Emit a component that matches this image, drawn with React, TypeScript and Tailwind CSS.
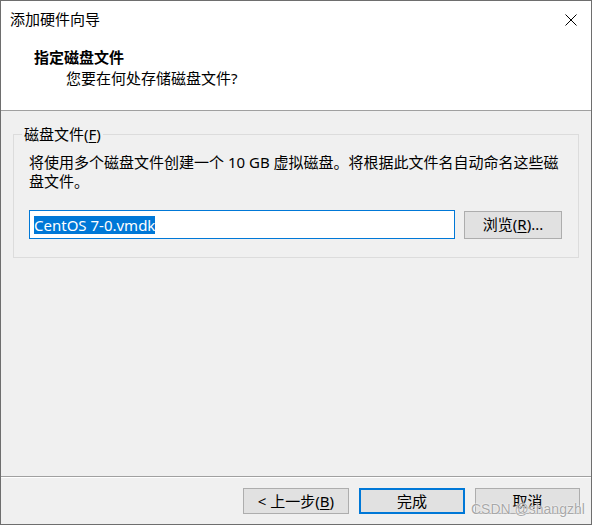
import type { ReactNode } from "react";

const ui = "font-['Noto_Sans','Noto_Sans_CJK_SC',sans-serif]";

function Key({ k }: { k: string }) {
  return <span className="underline underline-offset-2">{k}</span>;
}

function Button({
  children,
  active,
  className = "",
}: {
  children: ReactNode;
  active?: boolean;
  className?: string;
}) {
  return (
    <button
      type="button"
      className={
        active
          ? `flex h-[26px] items-center justify-center border-2 border-[#0078d7] bg-[#e1e1e1] text-[15px] text-black ${className}`
          : `flex h-[26px] items-center justify-center border border-[#adadad] bg-[#e1e1e1] text-[15px] text-black ${className}`
      }
    >
      {children}
    </button>
  );
}

export default function App() {
  return (
    <div
      className={`relative flex h-[525px] w-[592px] flex-col border border-[#6e6e6e] bg-[#f0f0f0] text-black ${ui}`}
    >
      {/* header */}
      <div className="h-[110px] border-b border-[#a0a0a0] bg-white">
        <div className="flex h-[36px] items-center justify-between pl-[9px] pr-[14px]">
          <span className="text-[15px] leading-none">添加硬件向导</span>
          <svg width="12" height="12" viewBox="0 0 12 12" className="mt-[1px]">
            <path d="M0.5 0.5 L11.5 11.5 M11.5 0.5 L0.5 11.5" stroke="#000" strokeWidth="1" />
          </svg>
        </div>
        <div className="pl-[33px] pt-[10px]">
          <p className="text-[15px] font-bold leading-[20px]">指定磁盘文件</p>
          <p className="pl-[32px] pt-[1px] text-[15px] leading-[20px]">
            您要在何处存储磁盘文件?
          </p>
        </div>
      </div>

      {/* body */}
      <div className="flex-1 pl-[12px] pr-[12px] pt-[14px]">
        <fieldset className="h-[133px] border border-[#dcdcdc] pl-[15px] pr-[15px]">
          <legend className="ml-[-7px] px-[2px] text-[15px] leading-[18px]">
            磁盘文件(<Key k="F" />)
          </legend>
          <p className="mt-[10px] text-[15px] leading-[19px]">
            将使用多个磁盘文件创建一个 10 GB 虚拟磁盘。将根据此文件名自动命名这些磁盘文件。
          </p>
          <div className="mt-[19px] flex items-center gap-[9px]">
            <div className="flex h-[29px] w-[426px] items-center border border-[#0078d7] bg-white pl-[4px]">
              <span className="bg-[#0078d7] text-[15px] leading-[18px] text-white">
                CentOS 7-0.vmdk
              </span>
            </div>
            <Button className="h-[28px] w-[98px]">
              浏览(<Key k="R" />)...
            </Button>
          </div>
        </fieldset>
      </div>

      {/* footer */}
      <div className="h-[48px] border-t border-[#a0a0a0]">
        <div className="flex h-full items-start justify-end gap-[10px] border-t border-white pr-[11px] pt-[10px]">
          <Button className="w-[106px]">
            &lt; 上一步(<Key k="B" />)
          </Button>
          <Button active className="w-[106px]">
            完成
          </Button>
          <Button className="w-[105px]">取消</Button>
        </div>
      </div>

      <span className="absolute left-[470px] top-[498px] font-['Liberation_Sans',sans-serif] text-[14px] text-[#a8a8a8] [text-shadow:0_0_2px_#fff,0_0_1px_#fff]">
        CSDN @shangzhl
      </span>
    </div>
  );
}
